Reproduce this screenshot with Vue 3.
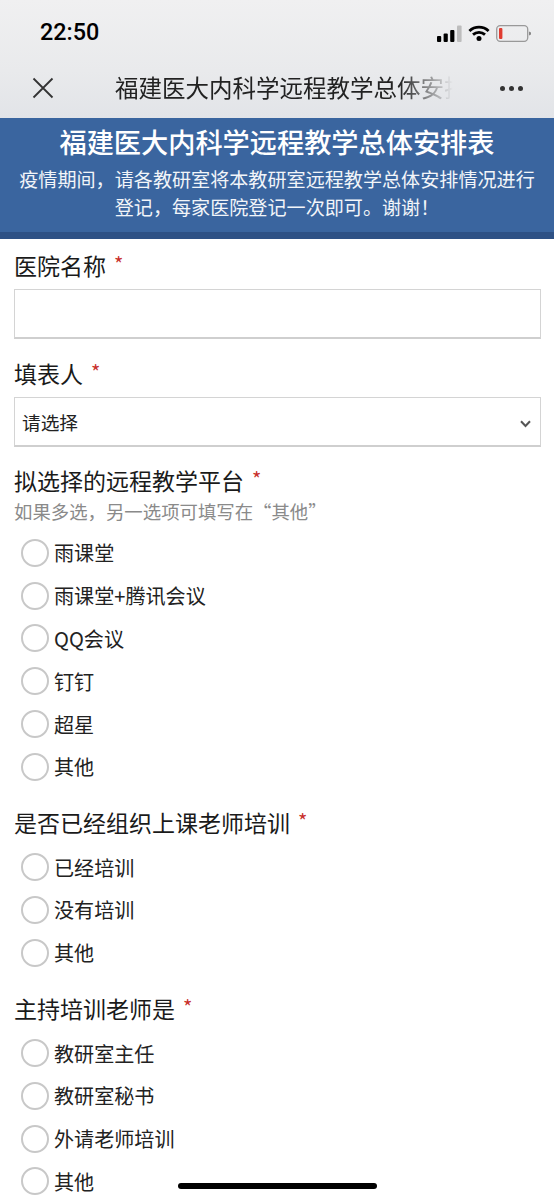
<script setup>
const groups = [
  { label: '拟选择的远程教学平台', hint: '如果多选，另一选项可填写在“其他”', options: ['雨课堂', '雨课堂+腾讯会议', 'QQ会议', '钉钉', '超星', '其他'] },
  { label: '是否已经组织上课老师培训', options: ['已经培训', '没有培训', '其他'] },
  { label: '主持培训老师是', options: ['教研室主任', '教研室秘书', '外请老师培训', '其他'] },
]
</script>

<template>
  <div class="page">
    <div class="chrome">
      <div class="status">
        <span class="time">22:50</span>
        <div class="status-icons">
          <svg width="25" height="17" viewBox="0 0 25 17">
            <rect x="0" y="11" width="4.2" height="6" rx="1" fill="#000" />
            <rect x="6.6" y="8.5" width="4.2" height="8.5" rx="1" fill="#000" />
            <rect x="13.2" y="5" width="4.2" height="12" rx="1" fill="#000" />
            <rect x="20" y="0.5" width="4.6" height="16.5" rx="1" fill="#bdbdbd" />
          </svg>
          <svg width="22" height="16" viewBox="0 0 22 16">
            <path d="M1.4 6a14 14 0 0 1 19.2 0M5 9.6a9 9 0 0 1 12 0" fill="none" stroke="#000" stroke-width="2.8" />
            <circle cx="11" cy="13.4" r="2.5" fill="#000" />
          </svg>
          <svg width="35" height="17" viewBox="0 0 35 17">
            <rect x="0.7" y="0.7" width="31" height="15.6" rx="3.5" fill="none" stroke="#999" stroke-width="1.3" />
            <rect x="3" y="3" width="3.4" height="11" rx="1" fill="#e03c31" />
            <path d="M33 6.5l2 1v2l-2 1z" fill="#888" />
          </svg>
        </div>
      </div>
      <div class="nav">
        <svg class="close" width="22" height="22" viewBox="0 0 22 22">
          <path d="M1.5 1.5l19 19M20.5 1.5l-19 19" stroke="#333" stroke-width="1.8" fill="none" />
        </svg>
        <div class="nav-title">福建医大内科学远程教学总体安排表</div>
        <div class="more"><i></i><i></i><i></i></div>
      </div>
    </div>

    <header class="banner">
      <h1>福建医大内科学远程教学总体安排表</h1>
      <p>疫情期间，请各教研室将本教研室远程教学总体安排情况进行登记，每家医院登记一次即可。谢谢！</p>
    </header>

    <form class="form">
      <div class="field first">
        <label class="label">医院名称<span class="req">*</span></label>
        <input class="box" type="text" />
      </div>
      <div class="field">
        <label class="label">填表人<span class="req">*</span></label>
        <div class="select-wrap">
          <select class="box select"><option>请选择</option></select>
          <svg class="chevron" width="11" height="8" viewBox="0 0 11 8">
            <path d="M1 1.2l4.5 4.8L10 1.2" fill="none" stroke="#555" stroke-width="2" />
          </svg>
        </div>
      </div>
      <div v-for="g in groups" :key="g.label" class="group">
        <div class="label">{{ g.label }}<span class="req">*</span></div>
        <div v-if="g.hint" class="hint">{{ g.hint }}</div>
        <div class="options" :class="{ hinted: g.hint }">
          <label v-for="o in g.options" :key="o" class="option">
            <input type="radio" :name="g.label" class="radio" />
            <span>{{ o }}</span>
          </label>
        </div>
      </div>
    </form>
    <div class="home"></div>
  </div>
</template>

<style>
html, body { margin: 0; background: #fff; }
</style>

<style scoped>
.page {
  position: relative;
  width: 554px;
  height: 1200px;
  overflow: hidden;
  background: #fff;
  color: #111;
  font-family: "Noto Sans CJK SC", "Noto Sans", sans-serif;
}
.chrome { height: 118px; background: linear-gradient(#f0f0f1, #e9eaec 60%, #e2e4e8); }
.status {
  height: 58px;
  padding: 8px 23px 0 40px;
  box-sizing: border-box;
  display: flex;
  align-items: center;
  justify-content: space-between;
}
.time { font: 500 23.4px/1 Roboto, sans-serif; color: #000; }
.status-icons { display: flex; align-items: center; gap: 6px; }
.nav { height: 60px; display: flex; align-items: center; padding: 0 31px 0 32px; }
.close { flex: none; margin-right: 61px; }
.nav-title {
  width: 338px;
  font-size: 23.5px;
  line-height: 1;
  white-space: nowrap;
  overflow: hidden;
  color: #222;
  -webkit-mask-image: linear-gradient(90deg, #000 84%, transparent 100%);
  mask-image: linear-gradient(90deg, #000 84%, transparent 100%);
}
.more { margin-left: auto; display: flex; gap: 4px; }
.more i { width: 5px; height: 5px; border-radius: 50%; background: #333; }
.banner {
  height: 121px;
  box-sizing: border-box;
  padding: 5px 18px 0;
  background: #3a659f;
  border-bottom: 7px solid #2e5185;
  color: #fff;
  text-align: center;
}
.banner h1 { margin: 0; font-size: 27.2px; line-height: 36px; font-weight: 500; }
.banner p { margin: 6px 0 0; font-size: 19.1px; line-height: 28px; color: #f2f5f9; }
.form { padding: 8px 13px 0 14px; }
.field { margin-top: 16px; }
.field.first { margin-top: 0; }
.label { display: block; font-size: 23px; line-height: 34px; color: #1a1a1a; }
.req { color: #c8302b; font-size: 20px; margin-left: 8px; vertical-align: 3px; }
.box {
  display: block;
  box-sizing: border-box;
  width: 100%;
  height: 50px;
  margin-top: 7px;
  background: #fff;
  border: 1px solid #d4d4d4;
  border-bottom: 2px solid #cfcfcf;
  border-radius: 0;
  outline: none;
}
.select-wrap { position: relative; }
.select {
  appearance: none;
  -webkit-appearance: none;
  padding: 0 7px;
  font: 18.7px "Noto Sans CJK SC", sans-serif;
  color: #222;
}
.chevron { position: absolute; right: 10px; top: 23px; }
.group { margin-top: 16px; }
.field + .group { margin-top: 14.5px; }
.hint { font-size: 18.4px; line-height: 22px; color: #8a8a8a; margin-top: 3px; }
.options { display: flex; flex-direction: column; margin-top: 6.5px; padding-left: 7px; }
.options.hinted { margin-top: 10px; }
.option { display: flex; align-items: center; height: 42.8px; font-size: 20.1px; color: #222; }
.radio {
  appearance: none;
  -webkit-appearance: none;
  flex: none;
  width: 28px;
  height: 28px;
  margin: 0 5px 0 0;
  background: #fff;
  border: 2px solid #c8c8c8;
  border-radius: 50%;
  box-sizing: border-box;
}
.home {
  position: absolute;
  left: 178px;
  top: 1183px;
  width: 199px;
  height: 6px;
  border-radius: 3px;
  background: #000;
}
</style>
